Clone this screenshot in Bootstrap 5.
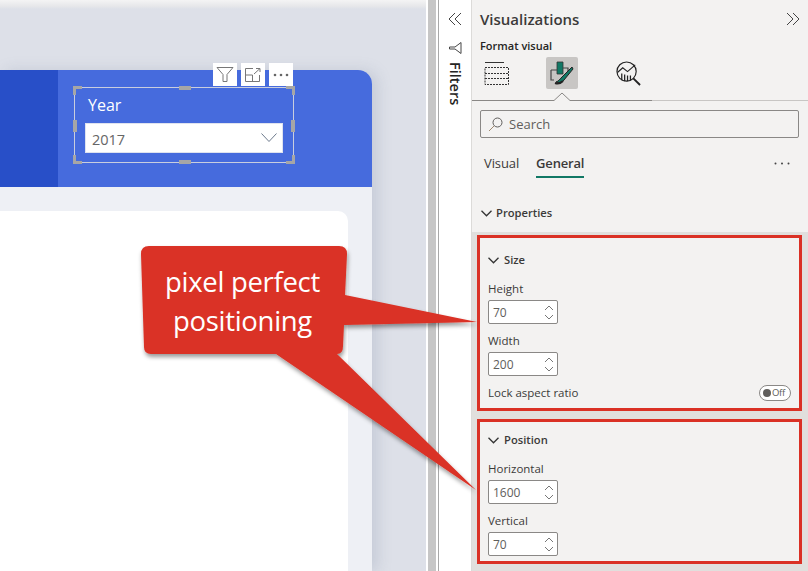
<!DOCTYPE html>
<html lang="en"><head><meta charset="utf-8"><title>Format visual</title>
<link href="https://cdn.jsdelivr.net/npm/bootstrap@5.3.0/dist/css/bootstrap.min.css" rel="stylesheet">
<style>
html,body{margin:0;width:808px;height:571px;overflow:hidden}
body{font-family:"Open Sans","Noto Sans",sans-serif;color:#252423;position:relative;background:#fff}
.shell{width:808px;height:571px}
.canvas-area{width:426px;height:571px;background:#dde0e8;position:relative;overflow:hidden;padding-top:70px;flex:none}
.canvas-area::before{content:"";position:absolute;left:0;right:0;top:0;height:9px;background:linear-gradient(#f4f4f4,#e6e7ea 70%,#dde0e8)}
.gap-white{width:2px;background:#fff;flex:none}
.rep-page{width:372px;height:501px;background:#eef0f5;border-top-right-radius:14px;box-shadow:6px 0 14px rgba(120,130,160,.22);position:relative}
.rep-head{height:117px;background:#466bdd;border-top-right-radius:14px}
.rep-dark{width:58px;background:#284fc8}
.rep-body{padding:24px 24px 0 0}
.rep-card{height:360px;background:#fff;border-top-right-radius:10px}
.slicer{margin:17px 0 0 16px;width:220px;height:76px;border:1px solid #c9cede;position:relative;padding:7px 10px 0 10px}
.slicer-title{color:#fff;font-size:16px;line-height:20px;margin-left:3px}
.slicer-drop{margin-top:8px;height:30px;background:#fff;border:1px solid #dfe3ef;padding:3px 5px 0 6px;color:#666;font-size:14.5px}
.drop-arrow{margin-top:-3px}
.hd{position:absolute;background:#a6a6a6}
.hd-tl{left:-2px;top:-2px;width:9px;height:9px;background:none;border-left:3px solid #a6a6a6;border-top:3px solid #a6a6a6}
.hd-tr{right:-2px;top:-2px;width:9px;height:9px;background:none;border-right:3px solid #a6a6a6;border-top:3px solid #a6a6a6}
.hd-bl{left:-2px;bottom:-2px;width:9px;height:9px;background:none;border-left:3px solid #a6a6a6;border-bottom:3px solid #a6a6a6}
.hd-br{right:-2px;bottom:-2px;width:9px;height:9px;background:none;border-right:3px solid #a6a6a6;border-bottom:3px solid #a6a6a6}
.hd-t{left:104px;top:-2px;width:12px;height:4px}
.hd-b{left:104px;bottom:-2px;width:12px;height:4px}
.hd-l{left:-2px;top:32px;width:4px;height:12px}
.hd-r{right:-2px;top:32px;width:4px;height:12px}
.tools{position:absolute;left:138px;top:-25px}
.tool-btn{width:24px;height:23px;background:#fff}
.strip{width:8px;background:#c6c6c6;flex:none}
.strip-w{width:2px;background:#fff;flex:none}
.filters{width:34px;flex:none;border-left:1px solid #a8a8a8;border-right:1px solid #dcdbd9;background:#fff;padding-top:12px}
.filters-label{writing-mode:vertical-rl;font-size:14.5px;font-weight:600;line-height:16px;margin-top:8px;color:#252423}
.viz{width:336px;flex:none;background:#f3f2f1}
.viz-head{height:38px;padding:0 8px 0 8px}
.viz-title{font-size:15px;font-weight:600;line-height:20px;color:#3b3a39}
.viz-sub{font-size:11px;font-weight:600;line-height:16px;padding-left:8px;color:#252423}
.icon-row{height:32px;margin-top:3px;padding-left:12px}
.sel-icon{width:32px;height:32px;background:#c8c6c4;border-radius:2px;margin-left:37px}
.ana-icon{margin-left:38px}
.caret-line{height:13px;position:relative}
.caret-line svg{position:absolute;left:0;top:0}
.search-box{margin:8px 0 0 8px;width:319px;height:28px;border:1px solid #8a8886;border-radius:2px;padding:1px 0 0 7px;font-size:13px;color:#605e5c;background:#f3f2f1;gap:6px}
.tab-row{height:30px;margin-top:12px;padding:0 18px 0 12px;font-size:13px}
.tab-on{font-weight:600;color:#3b3a39;border-bottom:2px solid #117865;height:28px;line-height:26px;margin-left:17px;letter-spacing:-.2px}
.tab-off{line-height:26px;height:28px;color:#3b3a39;letter-spacing:-.1px}
.dots{margin-top:12px}
.prop-head{height:52px;padding:14px 0 0 9px;font-size:11.2px;font-weight:600;line-height:16px;color:#3b3a39}
.gray-zone{background:#e1dfdd;padding:3px 5px 0 5px;height:339px}
.red-box{width:325px;border:3px solid #da3125;background:#f3f2f1;padding:0 8px}
.box-size{height:176px;padding-top:14px}
.box-pos{height:145px;margin-top:8px;padding-top:10px}
.sec-head{font-size:11.2px;font-weight:600;line-height:16px;color:#3b3a39;height:16px;gap:5px}
.fld-label{font-size:11.5px;line-height:16px;color:#3b3a39}
.lbl-first{margin-top:13px}
.lbl-next{margin-top:9px}
.num-box{width:70px;height:24px;margin-top:3px;background:#fff;border:1px solid #8a8886;border-radius:2px;padding:0 3px 0 4px;font-size:12px;color:#605e5c}
.num-val{padding-top:2px}
.toggle{width:32px;height:16px;border:1px solid #8a8886;border-radius:8px;padding-left:3px;font-size:9.5px;color:#605e5c;background:#fff;letter-spacing:-.3px}
.toggle i{display:block;width:8px;height:8px;border-radius:50%;background:#605e5c;margin-right:1px}
.lock-row{margin-top:9px;height:16px}
.callout-svg{position:absolute;left:0;top:0;pointer-events:none}
.callout-text{position:absolute;left:141px;top:262px;width:203px;text-align:center;color:#fff;font-size:27.5px;line-height:39px;letter-spacing:-.3px;white-space:nowrap}
</style></head>
<body>
<div class="shell d-flex">
  <div class="canvas-area">
    <div class="rep-page d-flex flex-column">
      <div class="rep-head d-flex">
        <div class="rep-dark"></div>
        <div class="slicer">
          <span class="hd hd-tl"></span><span class="hd hd-tr"></span><span class="hd hd-bl"></span><span class="hd hd-br"></span>
          <span class="hd hd-t"></span><span class="hd hd-b"></span><span class="hd hd-l"></span><span class="hd hd-r"></span>
          <div class="tools d-flex gap-1">
            <div class="tool-btn d-flex align-items-center justify-content-center"><svg width="18" height="17" viewBox="0 0 18 17" fill="none" stroke="#777" stroke-width="1"><path d="M1 1.500h16L11 8.500V15.500H7V8.500Z"/></svg></div>
            <div class="tool-btn d-flex align-items-center justify-content-center"><svg width="16" height="14" viewBox="0 0 16 14" fill="none" stroke="#777" stroke-width="1"><path d="M8 .5H.5v13h14V7M.5 7H7.500V13.500M9 6L15 .5M11 .5H15V4"/></svg></div>
            <div class="tool-btn d-flex align-items-center justify-content-center"><svg width="16" height="4" viewBox="0 0 16 4" fill="#666"><circle cx="2" cy="2" r="1.300"/><circle cx="8" cy="2" r="1.300"/><circle cx="14" cy="2" r="1.300"/></svg></div>
          </div>
          <div class="slicer-title">Year</div>
          <div class="slicer-drop d-flex align-items-center justify-content-between"><span>2017</span><svg class="drop-arrow" width="16" height="10" viewBox="0 0 16 10" fill="none" stroke="#6d7a8c" stroke-width="1"><path d="M.5 .5L8 8.500L15.500 .5"/></svg></div>
        </div>
      </div>
      <div class="rep-body"><div class="rep-card"></div></div>
    </div>
  </div>
  <div class="gap-white"></div>
  <div class="strip"></div>
  <div class="strip-w"></div>
  <div class="filters d-flex flex-column align-items-center">
    <svg width="14" height="14" viewBox="0 0 14 14" fill="none" stroke="#444" stroke-width="1"><path d="M7 1L1 7L7 13M13 1L7 7L13 13"/></svg>
    <svg class="mt-3" width="14" height="12" viewBox="0 0 14 12" fill="none" stroke="#444" stroke-width="1"><path d="M13 .5V11.500L7 7H1.500V5H7Z"/></svg>
    <div class="filters-label">Filters</div>
  </div>
  <div class="viz d-flex flex-column">
    <div class="viz-head d-flex align-items-center justify-content-between">
      <span class="viz-title">Visualizations</span>
      <svg width="14" height="14" viewBox="0 0 14 14" fill="none" stroke="#444" stroke-width="1"><path d="M1 1L7 7L1 13M7 1L13 7L7 13"/></svg>
    </div>
    <div class="viz-sub">Format visual</div>
    <div class="icon-row d-flex align-items-center">
      <svg width="25" height="25" viewBox="0 0 25 25" fill="none" stroke="#333" stroke-width="1"><path d="M1 1.500H20"/><path stroke-dasharray="2 1" d="M1 6.500H24.500V23.500H1ZM1 12.500H24.500M1 17.500H24.500"/></svg>
      <div class="sel-icon d-flex align-items-center justify-content-center">
        <svg width="24" height="26" viewBox="0 0 24 26"><path d="M7 2h6v12H7z" fill="#117865" stroke="#333" stroke-width=".8"/><path d="M1 10h6M1 10v10h3M13 8h5v3" fill="none" stroke="#444" stroke-width="1.200"/><path d="M22 7L11 18c-1 1-2 3-5 4 2 1 6 1 8-2L23 9Z" fill="#117865" stroke="#222" stroke-width="1"/><path d="M5 23c3 1 6 0 8-2" stroke="#222" stroke-width="2" fill="none"/></svg>
      </div>
      <svg class="ana-icon" width="25" height="25" viewBox="0 0 26 26" fill="none" stroke="#222"><circle cx="11" cy="11" r="10" stroke-width="1.200"/><path d="M1.500 12L7 7L12 11L20 4" stroke-width="1.200"/><path d="M6 20v-7M9 21v-7M12 21v-6M15 20v-5" stroke-width="1.300"/><path d="M18 18L25 25" stroke-width="2"/></svg>
    </div>
    <div class="caret-line"><svg width="336" height="13" viewBox="0 0 336 13" fill="none"><path d="M180 11.500H336" stroke="#c8c6c4"/><path d="M0 11.500H82L90 4L98 11.500H180" stroke="#8a8886" fill="#f3f2f1"/></svg></div>
    <div class="search-box d-flex align-items-center">
      <svg width="15" height="15" viewBox="0 0 15 15" fill="none" stroke="#605e5c"><circle cx="9.500" cy="5.500" r="4.500"/><path d="M6 9L1 14" stroke="#a08a70"/></svg><span>Search</span>
    </div>
    <div class="tab-row d-flex justify-content-between">
      <div class="d-flex"><span class="tab-off">Visual</span><span class="tab-on">General</span></div>
      <svg class="dots" width="16" height="3" viewBox="0 0 16 3" fill="#444"><circle cx="1.500" cy="1.500" r="1"/><circle cx="8" cy="1.500" r="1"/><circle cx="14.500" cy="1.500" r="1"/></svg>
    </div>
    <div class="prop-head d-flex align-items-center align-self-start gap-1">
      <svg width="11" height="7" viewBox="0 0 11 7" fill="none" stroke="#333" stroke-width="1.300"><path d="M.5 .8L5.500 5.800L10.500 .8"/></svg><span>Properties</span>
    </div>
    <div class="gray-zone">
      <div class="red-box box-size">
        <div class="sec-head d-flex align-items-center"><svg width="11" height="7" viewBox="0 0 11 7" fill="none" stroke="#333" stroke-width="1.300"><path d="M.5 .8L5.500 5.800L10.500 .8"/></svg><span>Size</span></div>
        <div class="fld-label lbl-first">Height</div>
        <div class="num-box d-flex align-items-center justify-content-between"><span class="num-val">70</span><svg width="10" height="17" viewBox="0 0 10 17" fill="none" stroke="#777"><path d="M1 6L5 2L9 6M1 11L5 15L9 11"/></svg></div>
        <div class="fld-label lbl-next">Width</div>
        <div class="num-box d-flex align-items-center justify-content-between"><span class="num-val">200</span><svg width="10" height="17" viewBox="0 0 10 17" fill="none" stroke="#777"><path d="M1 6L5 2L9 6M1 11L5 15L9 11"/></svg></div>
        <div class="lock-row d-flex align-items-center justify-content-between">
          <span class="fld-label">Lock aspect ratio</span>
          <div class="toggle d-flex align-items-center"><i></i><span>Off</span></div>
        </div>
      </div>
      <div class="red-box box-pos">
        <div class="sec-head d-flex align-items-center"><svg width="11" height="7" viewBox="0 0 11 7" fill="none" stroke="#333" stroke-width="1.300"><path d="M.5 .8L5.500 5.800L10.500 .8"/></svg><span>Position</span></div>
        <div class="fld-label lbl-first">Horizontal</div>
        <div class="num-box d-flex align-items-center justify-content-between"><span class="num-val">1600</span><svg width="10" height="17" viewBox="0 0 10 17" fill="none" stroke="#777"><path d="M1 6L5 2L9 6M1 11L5 15L9 11"/></svg></div>
        <div class="fld-label lbl-next">Vertical</div>
        <div class="num-box d-flex align-items-center justify-content-between"><span class="num-val">70</span><svg width="10" height="17" viewBox="0 0 10 17" fill="none" stroke="#777"><path d="M1 6L5 2L9 6M1 11L5 15L9 11"/></svg></div>
      </div>
    </div>
  </div>
</div>
<svg class="callout-svg" width="808" height="571" viewBox="0 0 808 571">
  <defs><filter id="sh" x="-10%" y="-10%" width="120%" height="120%"><feDropShadow dx="1" dy="3" stdDeviation="2" flood-color="#000" flood-opacity=".4"/></filter></defs>
  <path filter="url(#sh)" fill="#da3125" d="M149 246H339Q347 246 347 254L345 295L477 322L344 325L343 346Q343 354 337 354L476 490L276 354H151Q144 354 144 347L141 254Q141 246 149 246Z"/>
</svg>
<div class="callout-text">pixel perfect<br>positioning</div>
</body></html>
